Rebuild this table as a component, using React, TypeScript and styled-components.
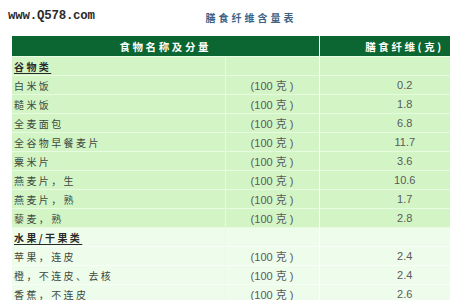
import * as React from 'react'
import styled, { createGlobalStyle } from 'styled-components'

const GlobalStyle = createGlobalStyle`
    html, body {
        margin: 0;
        padding: 0;
        overflow: hidden;
        background: #ffffff;
    }
`

const Page = styled.div`
    position: relative;
    width: 450px;
    height: 300px;
    overflow: hidden;
    background: #ffffff;
`

// 左上の透かしロゴ
const Watermark = styled.div`
    position: absolute;
    left: 8px;
    top: 9px;
    font-family: "Liberation Mono", "DejaVu Sans Mono", monospace;
    font-size: 12.4px;
    font-weight: bold;
    color: #2a2a2a;
    letter-spacing: -0.2px;
`

const Sheet = styled.div`
    width: 478px;
    margin-left: 12px;
`

const Caption = styled.div`
    height: 36px;
    line-height: 36px;
    text-align: center;
    font-family: "Noto Sans CJK SC", sans-serif;
    font-size: 10px;
    font-weight: bold;
    letter-spacing: 3px;
    color: #3f6283;
`

const Table = styled.table`
    width: 478px;
    border-collapse: collapse;
    table-layout: fixed;
`

const HeadCell = styled.th`
    height: 20px;
    padding: 0;
    background: #0c6631;
    color: #ffffff;
    font-family: "Noto Sans CJK SC", sans-serif;
    font-size: 10.5px;
    font-weight: bold;
    letter-spacing: 2.6px;
    text-align: center;
    border-right: 1px solid #ffffff;
    border-bottom: 1px solid #e9fbe6;
`

const Row = styled.tr<{ $tone: 'grain' | 'fruit' }>`
    background: ${(p) => (p.$tone === 'grain' ? '#d3f5c6' : '#eefcec')};
    border-bottom: 1px solid ${(p) => (p.$tone === 'grain' ? '#e6fbe0' : '#f8fff7')};
`

const NameCell = styled.td<{ $title?: boolean }>`
    height: 18px;
    padding: 0 0 0 2px;
    font-family: "Noto Sans CJK SC", sans-serif;
    font-size: 10px;
    font-weight: ${(p) => (p.$title ? 'bold' : 'normal')};
    text-decoration: ${(p) => (p.$title ? 'underline' : 'none')};
    text-underline-offset: 2px;
    letter-spacing: 2.4px;
    color: ${(p) => (p.$title ? '#2a2a2a' : '#3d4a3d')};
    white-space: nowrap;
    border-right: 1px solid #e8fbe2;
`

const AmountCell = styled.td`
    padding: 0;
    text-align: center;
    font-family: "Liberation Sans", "Noto Sans CJK SC", sans-serif;
    font-size: 11px;
    color: #5a5a5a;
    border-right: 1px solid #ffffff;
`

const FiberCell = styled.td`
    padding: 0;
    text-align: center;
    font-family: "Liberation Sans", sans-serif;
    font-size: 11px;
    color: #5a5a5a;
`

type Item = { name: string; fiber: string }
type Group = { title: string; tone: 'grain' | 'fruit'; items: Item[] }

const groups: Group[] = [
    {
        title: '谷物类',
        tone: 'grain',
        items: [
            { name: '白米饭', fiber: '0.2' },
            { name: '糙米饭', fiber: '1.8' },
            { name: '全麦面包', fiber: '6.8' },
            { name: '全谷物早餐麦片', fiber: '11.7' },
            { name: '粟米片', fiber: '3.6' },
            { name: '燕麦片，生', fiber: '10.6' },
            { name: '燕麦片，熟', fiber: '1.7' },
            { name: '藜麦，熟', fiber: '2.8' },
        ],
    },
    {
        title: '水果/干果类',
        tone: 'fruit',
        items: [
            { name: '苹果，连皮', fiber: '2.4' },
            { name: '橙，不连皮、去核', fiber: '2.4' },
            { name: '香蕉，不连皮', fiber: '2.6' },
        ],
    },
]

export default function App() {
    return (
        <Page>
            <GlobalStyle />
            <Sheet>
                <Caption>膳食纤维含量表</Caption>
                <Table>
                    <colgroup>
                        <col style={{ width: 213 }} />
                        <col style={{ width: 94 }} />
                        <col style={{ width: 171 }} />
                    </colgroup>
                    <thead>
                        <tr>
                            <HeadCell colSpan={2}>食物名称及分量</HeadCell>
                            <HeadCell>膳食纤维(克)</HeadCell>
                        </tr>
                    </thead>
                    <tbody>
                        {groups.map((g) => (
                            <React.Fragment key={g.title}>
                                <Row $tone={g.tone}>
                                    <NameCell $title>{g.title}</NameCell>
                                    <AmountCell />
                                    <FiberCell />
                                </Row>
                                {g.items.map((it) => (
                                    <Row $tone={g.tone} key={it.name}>
                                        <NameCell>{it.name}</NameCell>
                                        <AmountCell>(100 克 )</AmountCell>
                                        <FiberCell>{it.fiber}</FiberCell>
                                    </Row>
                                ))}
                            </React.Fragment>
                        ))}
                    </tbody>
                </Table>
            </Sheet>
            <Watermark>www.Q578.com</Watermark>
        </Page>
    )
}
